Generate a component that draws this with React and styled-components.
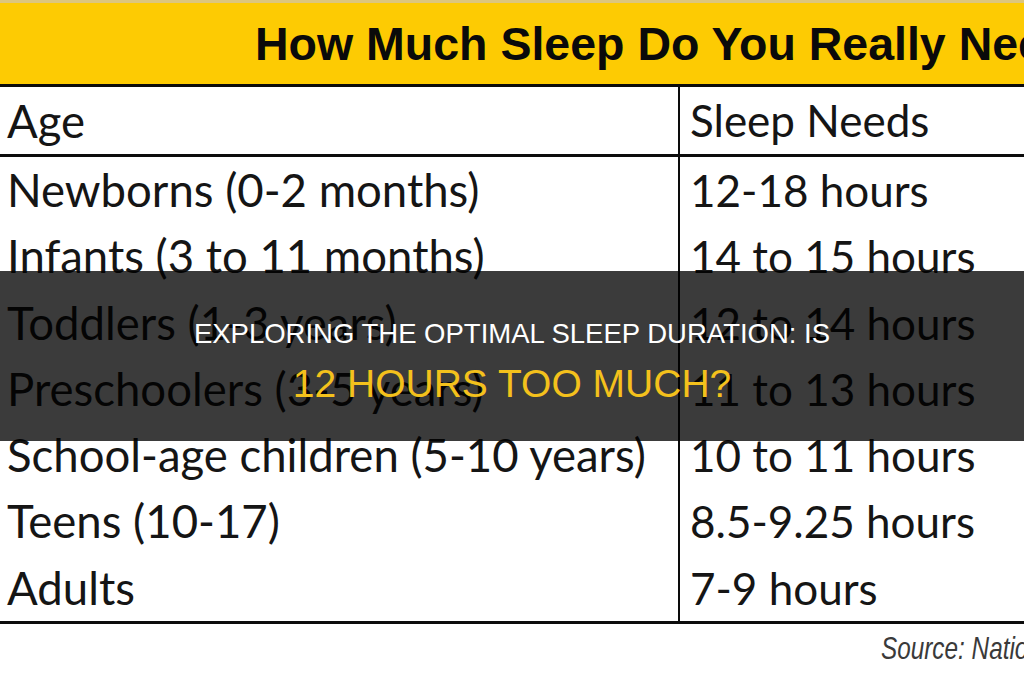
import React from 'react';
import styled, { createGlobalStyle } from 'styled-components';

const rows = [
  ['Newborns (0-2 months)', '12-18 hours'],
  ['Infants (3 to 11 months)', '14 to 15 hours'],
  ['Toddlers (1-3 years)', '12 to 14 hours'],
  ['Preschoolers (3-5 years)', '11 to 13 hours'],
  ['School-age children (5-10 years)', '10 to 11 hours'],
  ['Teens (10-17)', '8.5-9.25 hours'],
  ['Adults', '7-9 hours'],
];

const GlobalStyle = createGlobalStyle`
  html, body {
    margin: 0;
    padding: 0;
    background: #ffffff;
  }
`;

const Page = styled.div`
  position: relative;
  width: 1024px;
  height: 680px;
  overflow: hidden;
  background: #ffffff;
`;

const Banner = styled.header`
  display: flex;
  align-items: center;
  height: 81px;
  padding-left: 255px;
  background: #fdcb03;
  border-top: 3px solid #dcc67e;
  border-bottom: 3px solid #0c0c0c;
  overflow: hidden;
  white-space: nowrap;
  font-family: 'Liberation Sans', Arial, sans-serif;
  font-weight: 700;
  font-size: 46.5px;
  color: #0a0a0a;
`;

const Table = styled.div`
  display: grid;
  grid-template-columns: 678px 1fr;
  border-bottom: 3px solid #0c0c0c;
  font-family: Lato, 'Open Sans', sans-serif;
  color: #151515;
`;

const Cell = styled.div`
  height: ${(p) => (p.$head ? '67px' : '66.3px')};
  line-height: ${(p) => (p.$head ? '67px' : '66.3px')};
  padding-left: ${(p) => (p.$right ? '10px' : '7px')};
  font-size: ${(p) => (p.$right ? '44px' : '45.5px')};
  border-left: ${(p) => (p.$right ? '2px solid #0c0c0c' : 'none')};
  border-bottom: ${(p) => (p.$head ? '3px solid #0c0c0c' : 'none')};
  white-space: nowrap;
  overflow: hidden;
`;

const Source = styled.div`
  padding: 4px 0 0 881px;
  line-height: 40px;
  white-space: nowrap;
  overflow: hidden;
  font-family: 'Liberation Sans', Arial, sans-serif;
  font-style: italic;
  font-size: 32px;
  color: #3a3a3a;

  span {
    display: inline-block;
    transform: scaleX(0.76);
    transform-origin: left center;
  }
`;

const Overlay = styled.div`
  position: absolute;
  left: 0;
  right: 0;
  top: 271px;
  height: 170px;
  box-sizing: border-box;
  padding-top: 12px;
  display: flex;
  flex-direction: column;
  align-items: center;
  justify-content: center;
  background: rgba(0, 0, 0, 0.77);
  font-family: 'Liberation Sans', Arial, sans-serif;
  text-transform: uppercase;
`;

const Kicker = styled.div`
  font-size: 27.5px;
  line-height: 36px;
  color: #ffffff;
`;

const Headline = styled.div`
  margin-top: 7px;
  font-size: 39px;
  line-height: 50px;
  color: #f4c11c;
`;

export default function App() {
  return (
    <Page>
      <GlobalStyle />
      <Banner>How Much Sleep Do You Really Need?</Banner>
      <Table>
        <Cell $head>Age</Cell>
        <Cell $head $right>Sleep Needs</Cell>
        {rows.map(([age, need]) => (
          <React.Fragment key={age}>
            <Cell>{age}</Cell>
            <Cell $right>{need}</Cell>
          </React.Fragment>
        ))}
      </Table>
      <Source>
        <span>Source: National Sleep Foundation</span>
      </Source>
      <Overlay>
        <Kicker>Exploring the optimal sleep duration: is</Kicker>
        <Headline>12 hours too much?</Headline>
      </Overlay>
    </Page>
  );
}
